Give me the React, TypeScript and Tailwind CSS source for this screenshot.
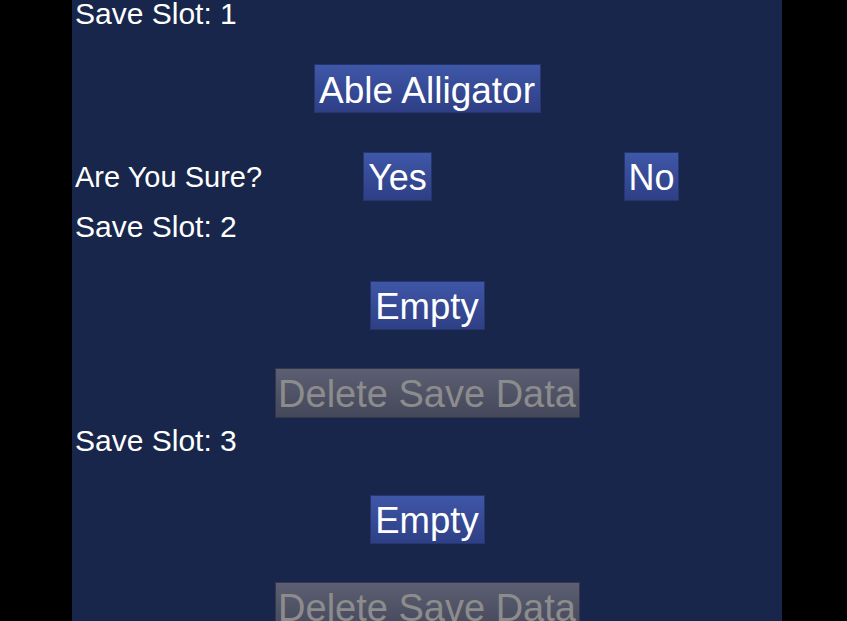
import React from "react";

const font = { fontFamily: '"Liberation Sans", Arial, sans-serif' };

function BlueBtn({ label, w, size }: { label: string; w: string; size: string }) {
  return (
    <div
      className={`${w} ${size} h-[49px] pt-[4px] shrink-0 flex items-center justify-center border border-[#27356f] bg-gradient-to-b from-[#3f57a8] to-[#2e3f85] text-white leading-none whitespace-nowrap`}
    >
      {label}
    </div>
  );
}

function GrayBtn({ label }: { label: string }) {
  return (
    <div className="w-[305px] h-[50px] pt-[2px] shrink-0 flex items-center justify-center border border-[#363848] bg-gradient-to-b from-[#5c5e73] to-[#45485a] text-[#8c8c8c] text-[38px] leading-none whitespace-nowrap">
      {label}
    </div>
  );
}

function Label({ text }: { text: string }) {
  return <div className="h-[29px] pl-[3px] text-white text-[30px] leading-none whitespace-nowrap">{text}</div>;
}

export default function App() {
  return (
    <div className="min-h-screen w-full bg-black" style={font}>
      <div className="ml-[72px] w-[710px] h-[621px] overflow-hidden bg-[#17264a] flex flex-col">
        {/* Slot 1 */}
        <div className="-mt-[1px]">
          <Label text="Save Slot: 1" />
        </div>
        <div className="mt-[36px] flex justify-center">
          <BlueBtn label="Able Alligator" w="w-[227px]" size="text-[37px]" />
        </div>
        <div className="mt-[39px] flex items-center h-[48px]">
          <div className="w-[291px] shrink-0 pl-[3px] pt-[2px] text-white text-[29px] leading-none whitespace-nowrap">
            Are You Sure?
          </div>
          <BlueBtn label="Yes" w="w-[69px]" size="text-[36px]" />
          <div className="w-[192px] shrink-0" />
          <BlueBtn label="No" w="w-[55px]" size="text-[36px]" />
        </div>

        {/* Slot 2 */}
        <div className="mt-[12px]">
          <Label text="Save Slot: 2" />
        </div>
        <div className="mt-[40px] flex justify-center">
          <BlueBtn label="Empty" w="w-[115px]" size="text-[36.5px]" />
        </div>
        <div className="mt-[38px] flex justify-center">
          <GrayBtn label="Delete Save Data" />
        </div>

        {/* Slot 3 */}
        <div className="mt-[8px]">
          <Label text="Save Slot: 3" />
        </div>
        <div className="mt-[40px] flex justify-center">
          <BlueBtn label="Empty" w="w-[115px]" size="text-[36.5px]" />
        </div>
        <div className="mt-[38px] flex justify-center shrink-0">
          <GrayBtn label="Delete Save Data" />
        </div>
      </div>
    </div>
  );
}
